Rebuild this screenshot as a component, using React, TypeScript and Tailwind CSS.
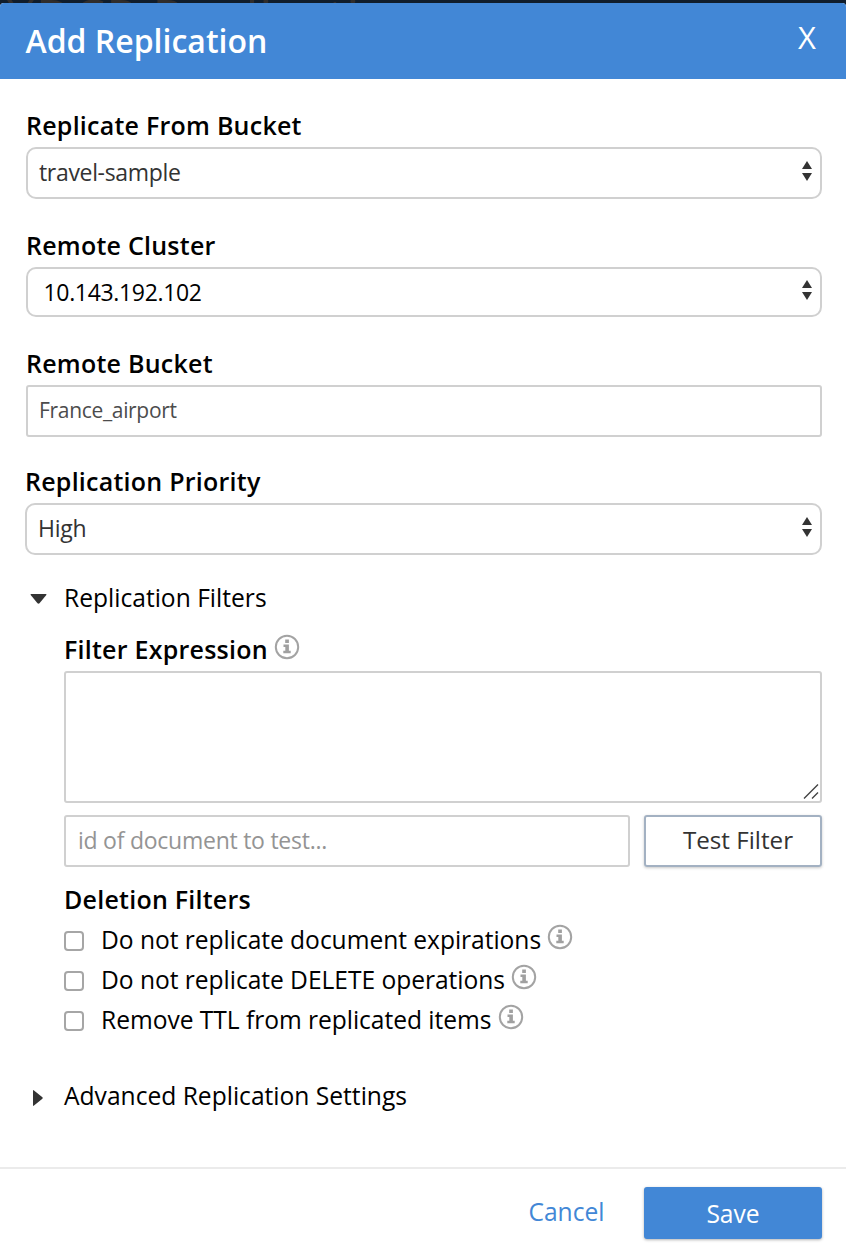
import React from "react";

const InfoIcon = ({ className = "" }: { className?: string }) => (
  <svg className={`shrink-0 ${className}`} width="26" height="26" viewBox="0 0 26 26" aria-hidden="true">
    <circle cx="13" cy="13" r="11.2" fill="none" stroke="#a3a3a3" strokeWidth="2" />
    <path d="M11.2 5.6h3.7v3.4h-3.7zM9.5 10.5h5.4v6.3h1.8v2.5H9.3v-2.5h2v-3.8H9.5z" fill="#a0a0a0" />
  </svg>
);

const Sorter = () => (
  <svg className="shrink-0" width="10" height="20" viewBox="0 0 10 20" aria-hidden="true">
    <path d="M0 8L5 0l5 8zM0 12h10l-5 8z" fill="#333" />
  </svg>
);

const SelectBox = ({ className, children }: { className: string; children: React.ReactNode }) => (
  <div className={`flex items-start justify-between rounded-[10px] border-2 border-[#d0d0d0] pr-[8.5px] ${className}`}>
    {children}
  </div>
);

const label = "block whitespace-nowrap text-[25px] tracking-[0.24px] font-semibold";

const options = [
  { text: "Do not replicate document expirations", style: "w-[440px]" },
  { text: "Do not replicate DELETE operations", style: "w-[404px]" },
  { text: "Remove TTL from replicated items", style: "w-[391px]" },
];

export default function App() {
  return (
    <div className="h-[1254px] w-[846px] overflow-hidden bg-[#101d2c] font-['Open_Sans','Noto_Sans',sans-serif] text-black">
      <div className="h-[3px] overflow-hidden pl-[6px]">
        <div className="-mt-[8px] h-[11px] overflow-hidden text-[50px] leading-[48px] tracking-[1.2px] whitespace-nowrap text-[#302d2c]">XDCR Replications</div>
      </div>
      <div className="flex h-[1251px] flex-col overflow-hidden rounded-t-[4px] bg-white">
        <header className="flex h-[76px] shrink-0 justify-between bg-[#4287d6] pr-[30px] pl-[25.5px] text-white">
          <h1 className="text-[32px] leading-[76px] font-semibold">Add Replication</h1>
          <button className="h-[68px] text-[31px] leading-[68px] font-normal">X</button>
        </header>

        <main className="flex h-[1088px] shrink-0 flex-col pt-[26px] pr-[24px] pl-[26px]">
          <section>
            <label className={`h-[42px] leading-[41px] ${label}`}>Replicate From Bucket</label>
            <SelectBox className="h-[52px] pl-[11px]">
              <span className="text-[23px] leading-[46px] tracking-[-0.33px] text-[#333]">travel-sample</span>
              <span className="mt-[12px]"><Sorter /></span>
            </SelectBox>
          </section>
          <section className="mt-[26px]">
            <label className={`h-[42px] leading-[41px] ${label}`}>Remote Cluster</label>
            <SelectBox className="h-[50px] pl-[15.5px]">
              <span className="text-[23px] leading-[46px] tracking-[-0.33px]">10.143.192.102</span>
              <span className="mt-[11px]"><Sorter /></span>
            </SelectBox>
          </section>
          <section className="mt-[26px]">
            <label className={`h-[42px] leading-[41px] ${label}`}>Remote Bucket</label>
            <div className="h-[52px] rounded-[3px] border-2 border-[#d0d0d0] pl-[11px] text-[21px] leading-[47px] tracking-[-0.32px] text-[#4c4c4c]">France_airport</div>
          </section>
          <section className="mt-[24px] -ml-px">
            <label className={`h-[42px] leading-[41px] ${label}`}>Replication Priority</label>
            <SelectBox className="h-[52px] pl-[11px]">
              <span className="text-[23px] leading-[46px] tracking-[-0.25px] text-[#333]">High</span>
              <span className="mt-[12px]"><Sorter /></span>
            </SelectBox>
          </section>

          <div className="mt-[23px] flex h-[40px] items-center">
            <svg className="mt-[2px] mr-[17px] ml-[4px] shrink-0" width="17" height="10" viewBox="0 0 17 10" aria-hidden="true">
              <path d="M1.2 0h14.6q1.2 0 .5 1L9.5 9.2q-1 .9-2 0L.7 1Q0 0 1.2 0z" fill="#333" />
            </svg>
            <span className="h-[40px] text-[24.6px] leading-[39px]">Replication Filters</span>
          </div>

          <section className="ml-[38px]">
            <div className="mt-[12px] flex h-[41px]">
              <span className={`leading-[39px] ${label}`}>Filter Expression</span>
              <InfoIcon className="mt-[4px] ml-[6.2px]" />
            </div>
            <div className="flex h-[132px] items-end justify-end rounded-[3px] border-2 border-[#d0d0d0]">
              <svg width="17" height="17" viewBox="0 0 17 17" aria-hidden="true">
                <path d="M1 14.5L15 .5M9 14.5l6-6" stroke="#444" strokeWidth="1.4" fill="none" />
              </svg>
            </div>
            <div className="mt-[12px] flex h-[52px]">
              <div className="w-[566px] rounded-[3px] border-2 border-[#d0d0d0] pl-[12px] text-[23px] leading-[47px] tracking-[-0.25px] text-[#949494]">id of document to test...</div>
              <button className="ml-[14px] w-[178px] rounded-[3px] border-2 border-[#a3b1c2] pb-[2px] pl-[10px] text-center text-[24.2px] leading-[46px] text-[#333] shadow-[0_1px_3px_rgba(0,0,0,0.22)]">Test Filter</button>
            </div>

            <h2 className={`mt-[12px] h-[42px] leading-[40px] ${label}`}>Deletion Filters</h2>
            {options.map((o) => (
              <div key={o.text} className="flex h-[40px]">
                <span className="mt-[10px] mr-[17px] size-[20px] shrink-0 rounded-[4px] border-2 border-[#a6a6a6]" />
                <span className={`text-[24.6px] leading-[38px] tracking-[-0.04px] whitespace-nowrap ${o.style}`}>{o.text}</span>
                <InfoIcon className="mt-[3px] ml-[6px]" />
              </div>
            ))}
          </section>

          <div className="mt-[35px] flex h-[40px] items-center">
            <svg className="mt-[4px] mr-[21px] ml-[7px] shrink-0" width="10" height="16" viewBox="0 0 10 16" aria-hidden="true">
              <path d="M0 1Q0-.5 1 .5l8.4 6.8q.6.7 0 1.4L1 15.5Q0 16.5 0 15z" fill="#333" />
            </svg>
            <span className="h-[40px] text-[24.6px] leading-[39px]">Advanced Replication Settings</span>
          </div>
        </main>

        <footer className="flex h-[87px] shrink-0 justify-end border-t-2 border-[#ebebeb] pt-[18px] pr-[24px]">
          <button className="h-[49px] text-[24.6px] leading-[49px] text-[#4287d6]">Cancel</button>
          <button className="ml-[39.5px] h-[52px] w-[178px] rounded-[3px] bg-[#4287d6] text-[24.6px] leading-[53px] text-white shadow-[0_1px_3px_rgba(0,0,0,0.3)]">Save</button>
        </footer>
      </div>
    </div>
  );
}
